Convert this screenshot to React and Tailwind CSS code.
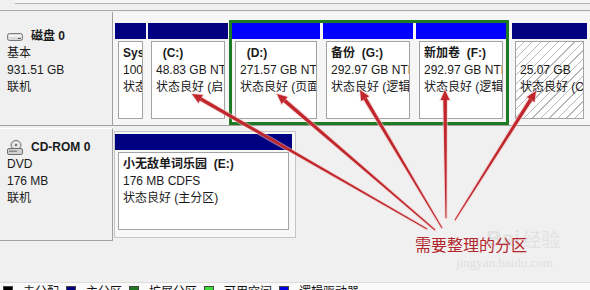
import React from 'react';

const FONT = "font-['Liberation_Sans','Noto_Sans_CJK_SC',sans-serif]";

// 一个分区列：顶部色条 + 白色内容框
const Part = ({ w, head, title, size, status, hatch }) => (
  <div className={`${w} flex flex-col shrink-0`}>
    <div className={`h-[16px] ${head}`} />
    <div
      className={`mx-[3px] mt-[2px] h-[78px] border border-[#a3a3a3] overflow-hidden pl-[4px] pt-[3px] leading-[17px] whitespace-pre text-[12px] text-[#1a1a1a] ${
        hatch
          ? 'bg-[repeating-linear-gradient(135deg,#ffffff_0px,#ffffff_5px,#b8b8b8_5px,#b8b8b8_6px)]'
          : 'bg-white'
      }`}
    >
      <div className="font-bold h-[17px] overflow-hidden">{title}</div>
      <div className="overflow-hidden">{size}</div>
      <div className="overflow-hidden">{status}</div>
    </div>
  </div>
);

const DiskIcon = () => (
  <svg width="16" height="8" viewBox="0 0 16 8" className="shrink-0">
    <rect x="0.5" y="0.5" width="15" height="7" rx="2" fill="#d9d9d9" stroke="#7a7a7a" />
    <rect x="2" y="2" width="12" height="2" fill="#f4f4f4" />
    <rect x="11" y="5" width="3" height="1" fill="#5a5a5a" />
  </svg>
);

const CdIcon = () => (
  <svg width="16" height="15" viewBox="0 0 16 15" className="shrink-0">
    <ellipse cx="9" cy="5" rx="5" ry="4.5" fill="#e6e6e6" stroke="#6f6f6f" />
    <circle cx="9" cy="5" r="1.2" fill="#6f6f6f" />
    <rect x="0.5" y="8.5" width="15" height="6" rx="1.5" fill="#d0d0d0" stroke="#6f6f6f" />
    <rect x="2" y="10.5" width="8" height="1.5" fill="#8a8a8a" />
  </svg>
);

// 箭头：头在上，尾在下，由粗变细
const arrows = [
  [192, 94, 427, 229],
  [277, 94, 435, 230],
  [360, 90, 442, 228],
  [445, 90, 446, 218],
  [536, 91, 455, 220],
];

const Arrow = ({ hx, hy, tx, ty }) => {
  const dx = hx - tx;
  const dy = hy - ty;
  const len = Math.sqrt(dx * dx + dy * dy);
  const ux = dx / len;
  const uy = dy / len;
  const nx = -uy;
  const ny = ux;
  const bx = hx - ux * 10;
  const by = hy - uy * 10;
  const p = (x, y) => `${x.toFixed(1)},${y.toFixed(1)}`;
  const body = [
    p(tx + nx * 0.5, ty + ny * 0.5),
    p(bx + nx * 1.8, by + ny * 1.8),
    p(bx - nx * 1.8, by - ny * 1.8),
    p(tx - nx * 0.5, ty - ny * 0.5),
  ].join(' ');
  const head = [p(hx, hy), p(bx + nx * 4.5, by + ny * 4.5), p(bx - nx * 4.5, by - ny * 4.5)].join(' ');
  return (
    <g>
      <polygon points={body} fill="#e8a0a0" stroke="#f0c4c4" strokeWidth="2" opacity="0.6" />
      <polygon points={head} fill="#e8a0a0" stroke="#f0c4c4" strokeWidth="2" opacity="0.6" />
      <polygon points={body} fill="#c0262c" />
      <polygon points={head} fill="#c0262c" />
    </g>
  );
};

const legend = [
  ['bg-black', '未分配'],
  ['bg-[#000080]', '主分区'],
  ['bg-[#217821]', '扩展分区'],
  ['bg-[#3ddc3d]', '可用空间'],
  ['bg-[#0000e0]', '逻辑驱动器'],
];

export default function App() {
  return (
    <div className={`relative w-[590px] h-[290px] overflow-hidden bg-[#f0f0f0] flex flex-col ${FONT}`}>
      {/* 上方滚动区的底边 */}
      <div className="h-[4px] ml-[15px] bg-[#f6f6f6] border-b border-[#b4b4b4] shrink-0" />
      <div className="mt-[6px] border-t border-[#a9a9a9] shrink-0" />

      {/* 磁盘 0 */}
      <div className="flex h-[114px] mt-[1px] shrink-0">
        <div className="w-[113px] shrink-0 border-r border-b border-[#a0a0a0] pl-[7px] pt-[16px] text-[12px] leading-[17px] text-[#1a1a1a]">
          <div className="flex items-center gap-[8px]">
            <DiskIcon />
            <span className="font-bold">磁盘 0</span>
          </div>
          <div>基本</div>
          <div>931.51 GB</div>
          <div>联机</div>
        </div>
        <div className="flex-1 flex items-start pl-[2px] pt-[8px] bg-[#f6f6f6] border-b border-[#a0a0a0]">
          <div className="flex gap-[2px] mt-[3px]">
            <Part w="w-[31px]" head="bg-[#000080]" title="System Reserved" size="100 MB NTFS" status="状态良好 (系统, 活动, 主分区)" />
            <Part w="w-[80px]" head="bg-[#000080]" title="  (C:)" size="48.83 GB NTFS" status="状态良好 (启动, 页面文件, 故障转储, 主分区)" />
          </div>
          <div className="ml-[1px] flex gap-[3px] border-[3px] border-[#1f7a24] h-[105px]">
            <Part w="w-[88px]" head="bg-[#0000ff]" title="  (D:)" size="271.57 GB NTFS" status="状态良好 (页面文件, 逻辑驱动器)" />
            <Part w="w-[90px]" head="bg-[#0000ff]" title="备份  (G:)" size="292.97 GB NTFS" status="状态良好 (逻辑驱动器)" />
            <Part w="w-[90px]" head="bg-[#0000ff]" title="新加卷  (F:)" size="292.97 GB NTFS" status="状态良好 (逻辑驱动器)" />
          </div>
          <div className="ml-[3px] mt-[3px]">
            <Part w="w-[75px]" head="bg-[#000080]" title="" size="25.07 GB" status="状态良好 (Cache)" hatch />
          </div>
        </div>
      </div>

      {/* CD-ROM 0 */}
      <div className="flex h-[113px] mt-[2px] shrink-0">
        <div className="w-[113px] shrink-0 border-t border-white border-r border-b border-r-[#a0a0a0] border-b-[#a0a0a0] pl-[7px] pt-[10px] text-[12px] leading-[17px] text-[#1a1a1a]">
          <div className="flex items-center gap-[8px]">
            <CdIcon />
            <span className="font-bold">CD-ROM 0</span>
          </div>
          <div>DVD</div>
          <div>176 MB</div>
          <div>联机</div>
        </div>
        <div className="ml-[1px] mt-[3px] w-[182px] h-[107px] border border-[#c6c6c6] bg-[#f7f7f7] pt-[2px]">
          <Part w="w-[177px]" head="bg-[#000080]" title="小无敌单词乐园  (E:)" size="176 MB CDFS" status="状态良好 (主分区)" />
        </div>
      </div>

      <div className="flex-1" />

      {/* 图例 */}
      <div className="h-[8px] shrink-0 bg-[#fafafa] border-t border-[#dcdcdc] flex items-start pl-[3px] pt-[3px] gap-[7px] text-[12px] leading-[14px] text-[#111]">
        {legend.map(([c, t]) => (
          <div key={t} className="flex items-start gap-[10px] shrink-0">
            <div className={`w-[10px] h-[10px] border border-[#444] ${c}`} />
            <span className="-mt-[1px]">{t}</span>
          </div>
        ))}
      </div>

      {/* 水印 */}
      <div className="absolute left-[486px] top-[228px] text-[22px] font-bold text-[#e2e2e2] leading-none flex items-end gap-[2px]">
        <span>Bai</span>
        <span className="text-[19px] font-normal">经验</span>
      </div>
      <div className="absolute left-[456px] top-[256px] text-[13px] text-[#e0e0e0] font-['Liberation_Serif',serif] leading-none">
        jingyan.baidu.com
      </div>

      {/* 标注箭头 */}
      <svg className="absolute inset-0 pointer-events-none" width="590" height="290" viewBox="0 0 590 290">
        {arrows.map(([hx, hy, tx, ty], i) => (
          <Arrow key={i} hx={hx} hy={hy} tx={tx} ty={ty} />
        ))}
      </svg>
      <div className="absolute left-[415px] top-[236px] text-[16px] leading-[20px] text-[#b3262c] whitespace-nowrap">
        需要整理的分区
      </div>
    </div>
  );
}
